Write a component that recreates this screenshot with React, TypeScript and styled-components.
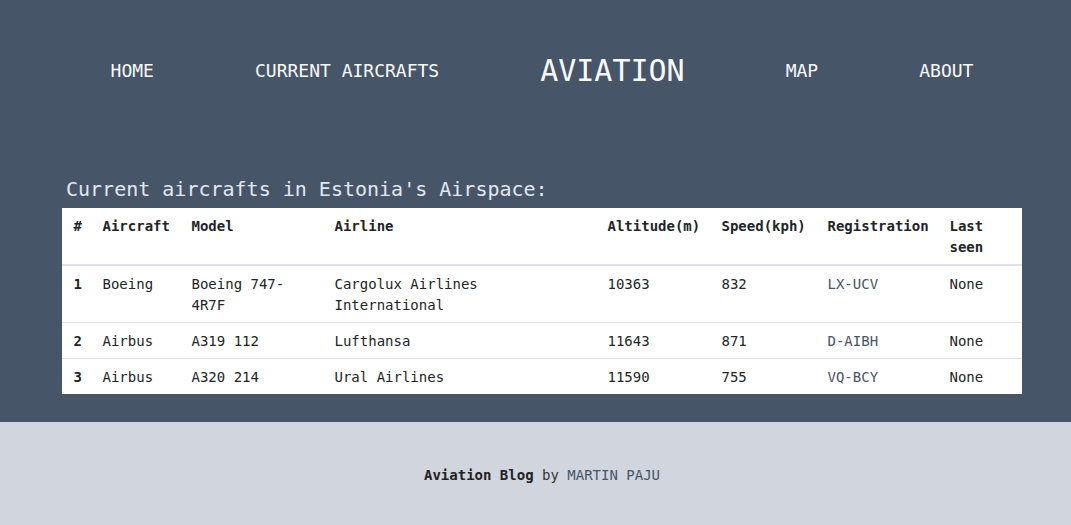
import React from "react";
import styled, { createGlobalStyle } from "styled-components";

const GlobalStyle = createGlobalStyle`
  html, body {
    margin: 0;
    padding: 0;
    font-family: "DejaVu Sans Mono", "Liberation Mono", monospace;
    background: #d1d5de;
  }
  * { box-sizing: border-box; }
`;

const Header = styled.header`
  background: #475569;
  padding: 0 0 28px 13px;
`;

const Nav = styled.nav`
  height: 140px;
  padding-top: 2px;
  display: flex;
  align-items: center;
  justify-content: center;
  gap: 101px;
`;

const NavLink = styled.a<{ $brand?: boolean }>`
  color: #f8fafc;
  text-decoration: none;
  text-transform: uppercase;
  font-size: ${(p) => (p.$brand ? "30px" : "18px")};
  line-height: 1;
  white-space: nowrap;
`;

const Main = styled.main`
  width: 960px;
  margin: 35px auto 0;
`;

const Title = styled.h2`
  margin: 0 0 5px;
  padding-left: 4px;
  font-size: 20px;
  line-height: 28px;
  font-weight: normal;
  color: #e2e8f0;
`;

const Table = styled.table`
  width: 960px;
  table-layout: fixed;
  border-collapse: collapse;
  background: #ffffff;
  color: #212529;
  font-size: 14px;
  line-height: 21px;
`;

const Th = styled.th`
  text-align: left;
  vertical-align: top;
  padding: 8px 9.5px 6px 11.5px;
  font-weight: bold;
  border-bottom: 2px solid #dee2e6;
`;

const Td = styled.td<{ $bold?: boolean }>`
  vertical-align: top;
  padding: 8px 9.5px 6px 11.5px;
  border-top: 1px solid #dee2e6;
  font-weight: ${(p) => (p.$bold ? "bold" : "normal")};
`;

const RegLink = styled.a`
  color: #475569;
  text-decoration: none;
`;

const Footer = styled.footer`
  padding: 43px 0 43px 13px;
  text-align: center;
  font-size: 14px;
  line-height: 21px;
  color: #333333;
`;

const Strong = styled.strong`
  color: #222222;
`;

const FooterLink = styled.a`
  color: #475569;
  text-decoration: none;
`;

const widths = [29, 89, 143, 273, 114, 106, 122, 84];

const rows = [
  { n: 1, aircraft: "Boeing", model: "Boeing 747-4R7F", airline: "Cargolux Airlines International", alt: "10363", speed: "832", reg: "LX-UCV", seen: "None" },
  { n: 2, aircraft: "Airbus", model: "A319 112", airline: "Lufthansa", alt: "11643", speed: "871", reg: "D-AIBH", seen: "None" },
  { n: 3, aircraft: "Airbus", model: "A320 214", airline: "Ural Airlines", alt: "11590", speed: "755", reg: "VQ-BCY", seen: "None" },
];

export default function App() {
  return (
    <>
      <GlobalStyle />
      <Header>
        <Nav>
          <NavLink href="#">Home</NavLink>
          <NavLink href="#">Current aircrafts</NavLink>
          <NavLink href="#" $brand>Aviation</NavLink>
          <NavLink href="#">Map</NavLink>
          <NavLink href="#">About</NavLink>
        </Nav>
        <Main>
          <Title>Current aircrafts in Estonia's Airspace:</Title>
          <Table>
            <colgroup>
              {widths.map((w, i) => (
                <col key={i} style={{ width: w }} />
              ))}
            </colgroup>
            <thead>
              <tr>
                <Th>#</Th>
                <Th>Aircraft</Th>
                <Th>Model</Th>
                <Th>Airline</Th>
                <Th>Altitude(m)</Th>
                <Th>Speed(kph)</Th>
                <Th>Registration</Th>
                <Th>Last seen</Th>
              </tr>
            </thead>
            <tbody>
              {rows.map((r) => (
                <tr key={r.n}>
                  <Td $bold>{r.n}</Td>
                  <Td>{r.aircraft}</Td>
                  <Td>{r.model}</Td>
                  <Td>{r.airline}</Td>
                  <Td>{r.alt}</Td>
                  <Td>{r.speed}</Td>
                  <Td>
                    <RegLink href="#">{r.reg}</RegLink>
                  </Td>
                  <Td>{r.seen}</Td>
                </tr>
              ))}
            </tbody>
          </Table>
        </Main>
      </Header>
      <Footer>
        <Strong>Aviation Blog</Strong> by <FooterLink href="#">MARTIN PAJU</FooterLink>
      </Footer>
    </>
  );
}
